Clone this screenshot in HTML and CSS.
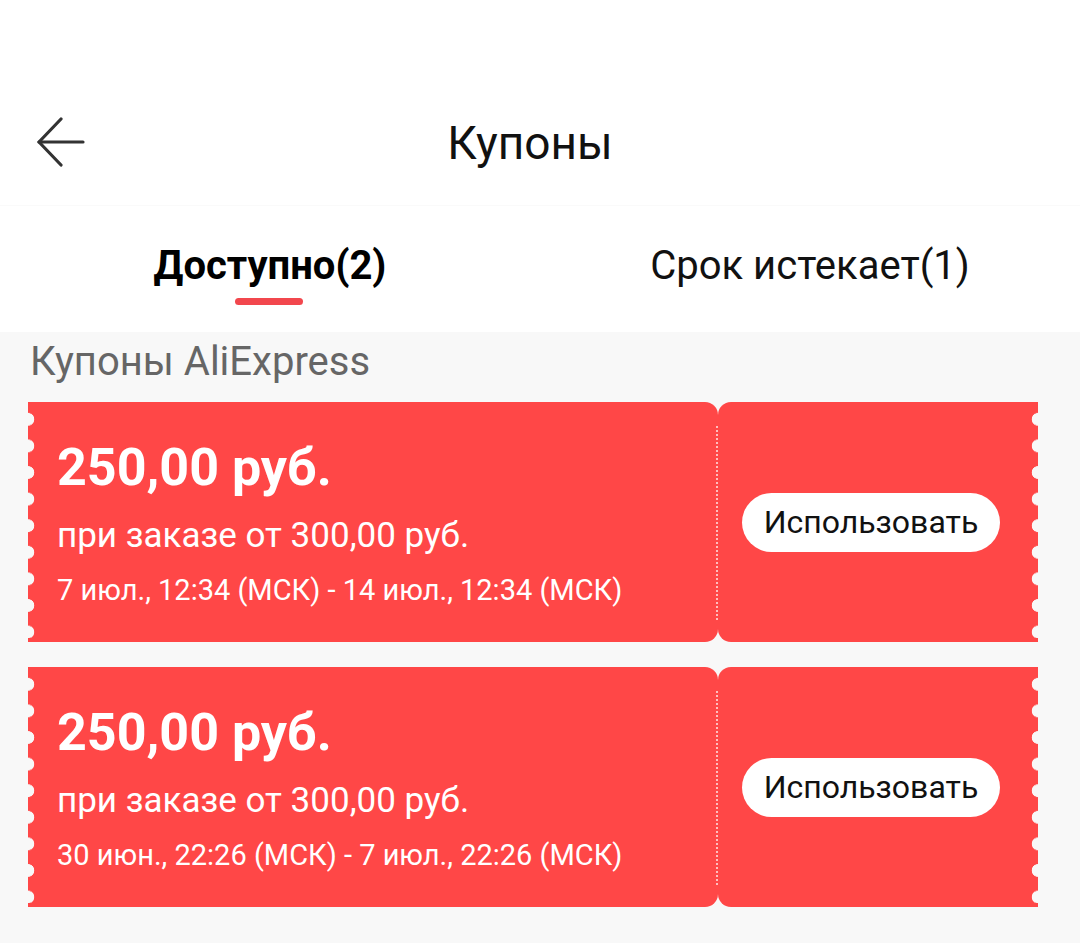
FILE: index.html
```html
<!DOCTYPE html>
<html lang="ru">
<head>
  <meta charset="UTF-8">
  <meta name="viewport" content="width=device-width, initial-scale=1.0">
  <title>Купоны</title>
  <link rel="stylesheet" href="styles.css">
</head>
<body>
  <header class="app-header">
    <div class="toolbar">
      <button class="back-btn" aria-label="Назад">
        <svg width="50" height="50" viewBox="0 0 50 50" fill="none" stroke="#333" stroke-width="3.2" stroke-linecap="round" stroke-linejoin="round">
          <path d="M47 25 H3"/>
          <path d="M25 2 L3 25 L25 48"/>
        </svg>
      </button>
      <h1 class="toolbar-title">Купоны</h1>
    </div>
  </header>

  <nav class="tabs">
    <div class="tab active">Доступно(2)</div>
    <div class="tab">Срок истекает(1)</div>
  </nav>

  <main class="coupons">
    <h2 class="section-title">Купоны AliExpress</h2>

    <div class="coupon">
      <div class="coupon-info">
        <div class="coupon-amount">250,00 руб.</div>
        <div class="coupon-cond">при заказе от 300,00 руб.</div>
        <div class="coupon-dates">7 июл., 12:34 (МСК) - 14 июл., 12:34 (МСК)</div>
      </div>
      <div class="coupon-action">
        <button class="use-btn">Использовать</button>
      </div>
    </div>

    <div class="coupon">
      <div class="coupon-info">
        <div class="coupon-amount">250,00 руб.</div>
        <div class="coupon-cond">при заказе от 300,00 руб.</div>
        <div class="coupon-dates">30 июн., 22:26 (МСК) - 7 июл., 22:26 (МСК)</div>
      </div>
      <div class="coupon-action">
        <button class="use-btn">Использовать</button>
      </div>
    </div>
  </main>
</body>
</html>
```

FILE: styles.css
```css
:root {
  --bg-color: #f8f8f8;
  --red: #ff4747;
  --text-color: #111111;
  --muted: #666666;
}
* { box-sizing: border-box; }
body {
  margin: 0;
  font-family: Roboto, 'Noto Sans', sans-serif;
  background-color: var(--bg-color);
  color: var(--text-color);
}

/* top bar */
.app-header {
  background: #fff;
  padding-top: 80px;
}
.toolbar {
  height: 125px;
  display: flex;
  align-items: center;
  justify-content: center;
  padding-right: 20px;
  position: relative;
}
.back-btn {
  position: absolute;
  left: 36px;
  top: 37px;
  padding: 0;
  border: 0;
  background: none;
  display: flex;
}
.toolbar-title {
  margin: 0;
  font-size: 46px;
  font-weight: 400;
  color: #111;
}

/* tabs */
.tabs {
  display: flex;
  background: #fff;
  height: 127px;
  border-top: 1px solid #fafafa;
}
.tab {
  flex: 1;
  display: flex;
  justify-content: center;
  padding-top: 36px;
  font-size: 40px;
  color: #111;
  position: relative;
}
.tab.active {
  font-weight: 700;
  color: #000;
}
.tab.active::after {
  content: '';
  position: absolute;
  left: 50%;
  top: 92px;
  width: 68px;
  height: 7px;
  margin-left: -35px;
  border-radius: 4px;
  background: #f2474d;
}

/* coupon list */
.coupons {
  padding: 10px 42px 30px 28px;
}
.section-title {
  margin: 0 0 20px 2px;
  font-size: 40px;
  font-weight: 400;
  color: var(--muted);
  line-height: 40px;
}
.coupon {
  display: flex;
  height: 240px;
  margin-bottom: 25px;
  color: #fff;
  position: relative;
}
/* scalloped edges */
.coupon::before,
.coupon::after {
  content: '';
  position: absolute;
  top: 4px;
  bottom: 4px;
  width: 7px;
  z-index: 1;
}
.coupon::before {
  left: 0;
  background: radial-gradient(circle at 0 50%, var(--bg-color) 6px, transparent 6.6px) 0 0 / 7px 26.6px repeat-y;
}
.coupon::after {
  right: 0;
  background: radial-gradient(circle at 100% 50%, var(--bg-color) 6px, transparent 6.6px) 0 0 / 7px 26.6px repeat-y;
}
.coupon-info {
  flex: 1;
  background: var(--red);
  border-radius: 0 13px 13px 0;
  padding: 36px 0 0 29px;
}
.coupon-amount {
  font-size: 52px;
  font-weight: 700;
  line-height: 60px;
}
.coupon-cond {
  margin-top: 18px;
  font-size: 35px;
  line-height: 40px;
}
.coupon-dates {
  margin-top: 17px;
  font-size: 29px;
  line-height: 34px;
}
.coupon-action {
  width: 320px;
  background: var(--red);
  border-radius: 13px 0 0 13px;
  display: flex;
  align-items: center;
  padding-left: 24px;
  position: relative;
}
/* perforation between the two halves */
.coupon-action::before {
  content: '';
  position: absolute;
  left: -2px;
  top: 24px;
  bottom: 22px;
  border-left: 2px dotted rgba(255, 255, 255, 0.65);
}
.use-btn {
  height: 59px;
  width: 258px;
  border: 0;
  border-radius: 30px;
  background: #fff;
  font-family: inherit;
  font-size: 32px;
  color: #111;
  padding: 0;
}
```
